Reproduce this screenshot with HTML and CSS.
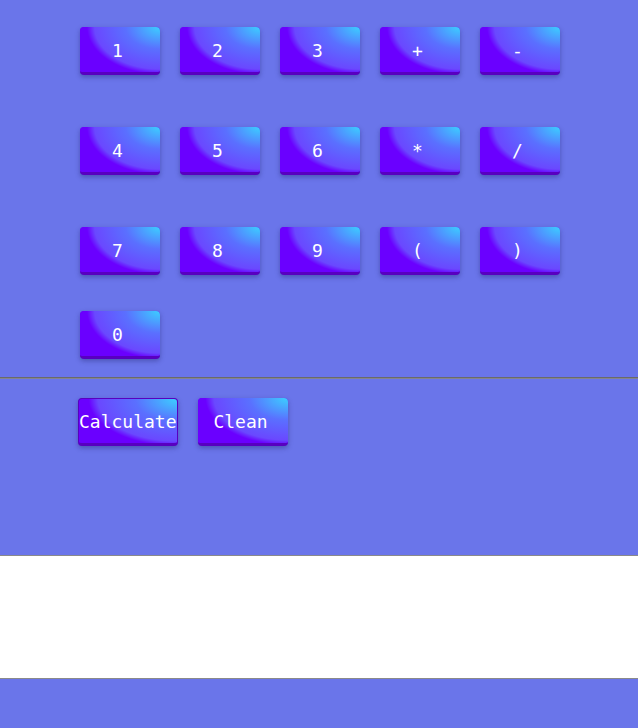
FILE: index.html
```html
<!DOCTYPE html>
<html>
<head>
<meta charset="utf-8">
<link rel="stylesheet" href="styles.css">
</head>
<body>
<div class="keypad">
  <div class="row">
    <button class="key">1</button>
    <button class="key">2</button>
    <button class="key">3</button>
    <button class="key">+</button>
    <button class="key">-</button>
  </div>
  <div class="row">
    <button class="key">4</button>
    <button class="key">5</button>
    <button class="key">6</button>
    <button class="key">*</button>
    <button class="key">/</button>
  </div>
  <div class="row">
    <button class="key">7</button>
    <button class="key">8</button>
    <button class="key">9</button>
    <button class="key">(</button>
    <button class="key">)</button>
  </div>
  <div class="row row-last">
    <button class="key">0</button>
  </div>
</div>
<hr class="divider">
<div class="actions">
  <button class="key action calc">Calculate</button>
  <button class="key action clean">Clean</button>
</div>
<div class="output"></div>
</body>
</html>
```
FILE: styles.css
```css
html, body {
  margin: 0;
  padding: 0;
  background: #6a75ea;
}
body {
  font-family: "DejaVu Sans Mono", monospace;
  height: 728px;
  overflow: hidden;
}
.keypad {
  padding: 27px 0 0 80px;
  display: flex;
  flex-direction: column;
  gap: 52px;
}
.row {
  display: flex;
  gap: 20px;
}
.row-last {
  margin-top: -16px;
}
.key {
  box-sizing: border-box;
  width: 80px;
  height: 48px;
  margin: 0;
  padding: 1px 5px 0 0;
  border: none;
  border-bottom: 3px solid #5800c0;
  border-radius: 4px;
  color: #ffffff;
  font-family: "DejaVu Sans Mono", monospace;
  font-size: 18px;
  background: radial-gradient(76px 49px at 100% 0%, #3bd0ff 0%, #5a70ff 45%, #6a48ff 86%, #6a00ff 96%);
  background-color: #6a00ff;
  box-shadow: 0 2px 5px rgba(20, 20, 80, 0.35);
}
.divider {
  margin: 18px 0 0 0;
  height: 0;
  border: none;
  border-top: 1px solid #6a6a6a;
  border-bottom: 1px solid #858590;
}
.actions {
  display: flex;
  gap: 20px;
  padding: 19px 0 0 78px;
}
.action {
  height: 48px;
}
.calc {
  width: 100px;
  padding: 0 5px 0 0;
  border: 1px solid #5800c0;
  border-bottom: 3px solid #5800c0;
  background: radial-gradient(92px 49px at 100% 0%, #3bd0ff 0%, #5a70ff 45%, #6a48ff 86%, #6a00ff 96%);
  background-color: #6a00ff;
}
.clean {
  width: 90px;
  background: radial-gradient(86px 49px at 100% 0%, #3bd0ff 0%, #5a70ff 45%, #6a48ff 86%, #6a00ff 96%);
  background-color: #6a00ff;
}
.output {
  margin-top: 109px;
  height: 122px;
  background: #ffffff;
  border-top: 1px solid #8a8a8a;
  border-bottom: 1px solid #8a8a8a;
}
```
